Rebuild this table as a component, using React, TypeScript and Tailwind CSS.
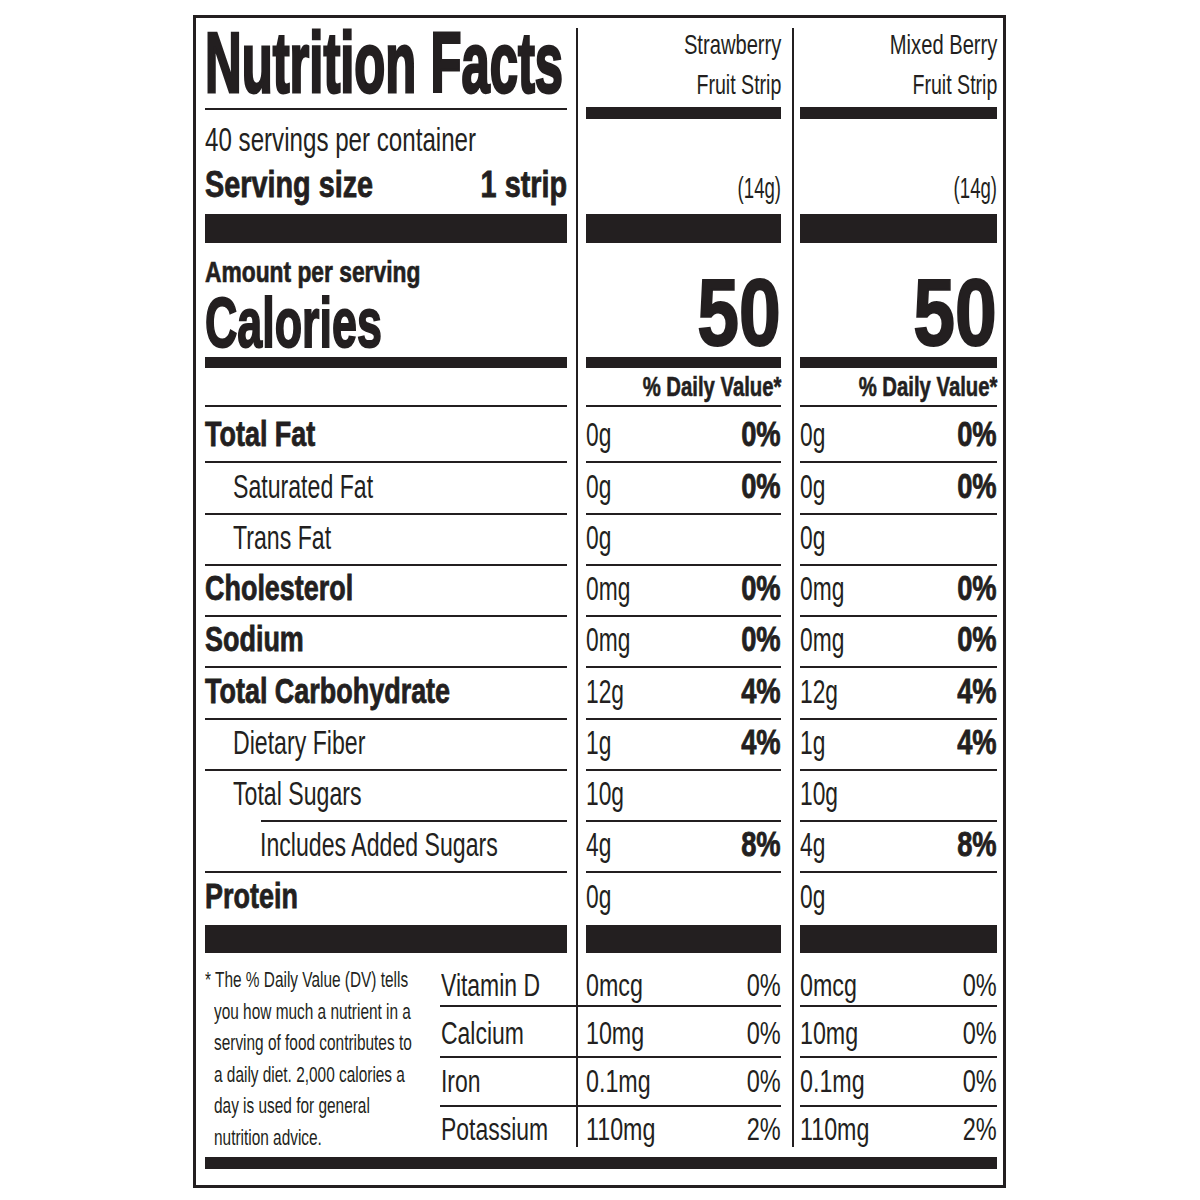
import React from "react";

function T({ children, cls }: { children: React.ReactNode; cls: string }) {
  return <span className={"inline-block whitespace-nowrap " + cls}>{children}</span>;
}

type Row = { name: string; bold?: boolean; indent?: 0 | 1 | 2; h: string; v: string; p: string; last?: boolean };

const rows: Row[] = [
  { name: "Total Fat", bold: true, h: "h-[56px]", v: "0g", p: "0%" },
  { name: "Saturated Fat", indent: 1, h: "h-[52px]", v: "0g", p: "0%" },
  { name: "Trans Fat", indent: 1, h: "h-[51px]", v: "0g", p: "" },
  { name: "Cholesterol", bold: true, h: "h-[51px]", v: "0mg", p: "0%" },
  { name: "Sodium", bold: true, h: "h-[51px]", v: "0mg", p: "0%" },
  { name: "Total Carbohydrate", bold: true, h: "h-[52px]", v: "12g", p: "4%" },
  { name: "Dietary Fiber", indent: 1, h: "h-[51px]", v: "1g", p: "4%" },
  { name: "Total Sugars", indent: 1, h: "h-[51px]", v: "10g", p: "" },
  { name: "Includes Added Sugars", indent: 2, h: "h-[51px]", v: "4g", p: "8%" },
  { name: "Protein", bold: true, h: "h-[54px]", v: "0g", p: "", last: true },
];

type Min = { name: string; v: string; p: string; h: string; pb: string; line: boolean };
const minerals: Min[] = [
  { name: "Vitamin D", v: "0mcg", p: "0%", h: "h-[54px]", pb: "pb-[4px]", line: true },
  { name: "Calcium", v: "10mg", p: "0%", h: "h-[51px]", pb: "pb-[7px]", line: true },
  { name: "Iron", v: "0.1mg", p: "0%", h: "h-[49px]", pb: "pb-[8px]", line: true },
  { name: "Potassium", v: "110mg", p: "2%", h: "h-[40px]", pb: "pb-[2px]", line: false },
];

const bar = "bg-[#231f20]";

function NameCell({ r }: { r: Row }) {
  const lineCls =
    r.indent === 2 ? "h-[2px] ml-[56px] bg-[#231f20]" : "h-[2px] bg-[#231f20]";
  const textPad = r.indent === 2 ? "pl-[55px]" : r.indent === 1 ? "pl-[28px]" : "pl-0";
  return (
    <div className={"flex flex-col " + r.h}>
      <div className={lineCls} />
      <div className={"flex flex-1 items-end " + textPad + (r.last ? " pb-[12px]" : " pb-[10px]")}>
        {r.bold ? (
          <T cls="origin-left scale-x-[0.77] text-[35px] leading-none font-bold [-webkit-text-stroke:0.8px_#231f20]">
            {r.name}
          </T>
        ) : (
          <T cls="origin-left scale-x-[0.68] text-[34px] leading-none">{r.name}</T>
        )}
      </div>
    </div>
  );
}

function ValueCell({ r }: { r: Row }) {
  return (
    <div className={"flex flex-col " + r.h}>
      <div className="h-[2px] bg-[#231f20]" />
      <div className={"flex flex-1 items-end justify-between" + (r.last ? " pb-[12px]" : " pb-[10px]")}>
        <T cls="origin-left scale-x-[0.67] text-[34px] leading-none">{r.v}</T>
        {r.p ? (
          <T cls="origin-right scale-x-[0.78] text-[35px] leading-none font-bold [-webkit-text-stroke:0.8px_#231f20]">
            {r.p}
          </T>
        ) : null}
      </div>
    </div>
  );
}

function ProductColumn({ l1, l2, w }: { l1: string; l2: string; w: string }) {
  return (
    <div className={"flex flex-col " + w}>
      <div className="flex h-[89px] flex-col items-end pt-[7px] text-[28px] leading-[40px]">
        <T cls="origin-right scale-x-[0.72]">{l1}</T>
        <T cls="origin-right scale-x-[0.70]">{l2}</T>
      </div>
      <div className={"h-[12px] " + bar} />
      <div className="flex h-[95px] items-end justify-end pb-[11px]">
        <T cls="origin-right scale-x-[0.62] text-[30px] leading-none">(14g)</T>
      </div>
      <div className={"h-[29px] " + bar} />
      <div className="flex h-[114px] items-end justify-end pb-[5px]">
        <T cls="origin-right scale-x-[0.79] text-[95px] leading-[80px] font-bold [-webkit-text-stroke:2px_#231f20]">
          50
        </T>
      </div>
      <div className={"h-[11px] " + bar} />
      <div className="flex h-[37px] items-end justify-end pb-[4px]">
        <T cls="origin-right scale-x-[0.725] text-[28px] leading-none font-bold [-webkit-text-stroke:0.6px_#231f20]">
          % Daily Value*
        </T>
      </div>
      {rows.map((r) => (
        <ValueCell key={r.name} r={r} />
      ))}
      <div className={"h-[28px] " + bar} />
      {minerals.map((m) => (
        <div key={m.name} className={"flex flex-col " + m.h}>
          <div className={"flex flex-1 items-end justify-between " + m.pb}>
            <T cls="origin-left scale-x-[0.75] text-[31px] leading-none">{m.v}</T>
            <T cls="origin-right scale-x-[0.76] text-[31px] leading-none">{m.p}</T>
          </div>
          {m.line ? <div className="h-[2px] bg-[#231f20]" /> : null}
        </div>
      ))}
    </div>
  );
}

export default function App() {
  return (
    <div className="min-h-[1200px] w-[1200px] bg-white pt-[15px] font-['Liberation_Sans',Arial,sans-serif] text-[#231f20]">
      <div className="ml-[193px] h-[1173px] w-[813px] border-[3px] border-[#231f20] pl-[9px] pr-[6px]">
        <div className="flex h-[1129px]">
          {/* Left column */}
          <div className="flex w-[362px] flex-col">
            <div className="h-[90px] pt-[1px]">
              <T cls="origin-left scale-x-[0.59] text-[86px] leading-none font-bold [-webkit-text-stroke:3px_#231f20]">
                Nutrition Facts
              </T>
            </div>
            <div className={"h-[2px] " + bar} />
            <div className="h-[104px] pt-[12px]">
              <div className="h-[34px]">
                <T cls="origin-left scale-x-[0.71] text-[34px] leading-none">40 servings per container</T>
              </div>
              <div className="mt-[11px] flex justify-between">
                <T cls="origin-left scale-x-[0.8] text-[36px] leading-none font-bold [-webkit-text-stroke:0.8px_#231f20]">
                  Serving size
                </T>
                <T cls="origin-right scale-x-[0.8] text-[36px] leading-none font-bold [-webkit-text-stroke:0.8px_#231f20]">
                  1 strip
                </T>
              </div>
            </div>
            <div className={"h-[29px] " + bar} />
            <div className="h-[114px] pt-[14px]">
              <div className="h-[30px]">
                <T cls="origin-left scale-x-[0.76] text-[30px] leading-none font-bold [-webkit-text-stroke:0.7px_#231f20]">
                  Amount per serving
                </T>
              </div>
              <div className="mt-[1px]">
                <T cls="origin-left scale-x-[0.64] text-[70px] leading-none font-bold [-webkit-text-stroke:2px_#231f20]">
                  Calories
                </T>
              </div>
            </div>
            <div className={"h-[11px] " + bar} />
            <div className="h-[37px]" />
            {rows.map((r) => (
              <NameCell key={r.name} r={r} />
            ))}
            <div className={"h-[28px] " + bar} />
            <div className="flex h-[194px]">
              <div className="w-[235px] pt-[11px] text-[22px] leading-[31.6px]">
                <div>
                  <T cls="origin-left scale-x-[0.70]">* The % Daily Value (DV) tells</T>
                </div>
                <div className="pl-[9px]">
                  <T cls="origin-left scale-x-[0.70]">you how much a nutrient in a</T>
                </div>
                <div className="pl-[9px]">
                  <T cls="origin-left scale-x-[0.70]">serving of food contributes to</T>
                </div>
                <div className="pl-[9px]">
                  <T cls="origin-left scale-x-[0.70]">a daily diet. 2,000 calories a</T>
                </div>
                <div className="pl-[9px]">
                  <T cls="origin-left scale-x-[0.70]">day is used for general</T>
                </div>
                <div className="pl-[9px]">
                  <T cls="origin-left scale-x-[0.70]">nutrition advice.</T>
                </div>
              </div>
              <div className="flex flex-1 flex-col">
                {minerals.map((m) => (
                  <div key={m.name} className={"flex flex-col " + m.h}>
                    <div className={"flex flex-1 items-end pl-[1px] " + m.pb}>
                      <T cls="origin-left scale-x-[0.74] text-[31px] leading-none">{m.name}</T>
                    </div>
                    {m.line ? <div className="h-[2px] bg-[#231f20]" /> : null}
                  </div>
                ))}
              </div>
            </div>
          </div>

          <div className="ml-[9px] mr-[8px] mt-[10px] w-[2px] bg-[#231f20]" />
          <ProductColumn l1="Strawberry" l2="Fruit Strip" w="w-[195px]" />
          <div className="ml-[11px] mr-[6px] mt-[10px] w-[2px] bg-[#231f20]" />
          <ProductColumn l1="Mixed Berry" l2="Fruit Strip" w="w-[197px]" />
        </div>
        <div className={"mt-[10px] h-[12px] " + bar} />
      </div>
    </div>
  );
}
